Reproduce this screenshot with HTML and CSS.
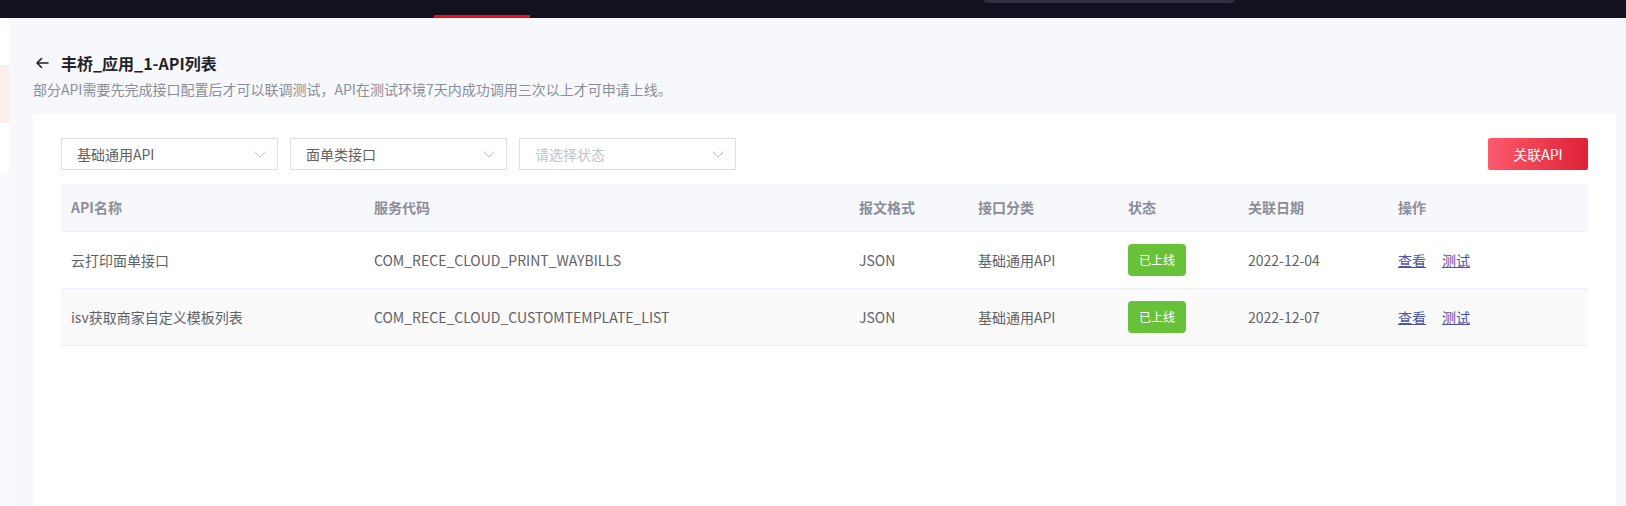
FILE: index.html
```html
<!DOCTYPE html>
<html lang="zh-CN">
<head>
<meta charset="utf-8">
<title>API列表</title>
<link rel="stylesheet" href="styles.css">
</head>
<body>
<header class="topbar">
  <div class="nav-active"></div>
  <div class="search-box"></div>
</header>
<div class="layout">
  <aside class="sidebar">
    <div class="side-a"></div>
    <div class="side-b"></div>
    <div class="side-c"></div>
    <div class="side-d"></div>
  </aside>
  <main class="main">
    <div class="page-head">
      <h1 class="title">
        <svg class="back" width="14" height="14" viewBox="0 0 14 14"><path d="M13 7H2M6.5 2.5L2 7l4.5 4.5" fill="none" stroke="#1f2329" stroke-width="1.6" stroke-linecap="round" stroke-linejoin="round"/></svg>
        <span>丰桥_应用_1-API列表</span>
      </h1>
      <p class="subtitle">部分API需要先完成接口配置后才可以联调测试，API在测试环境7天内成功调用三次以上才可申请上线。</p>
    </div>
    <section class="card">
      <div class="toolbar">
        <div class="filters">
          <div class="select"><span>基础通用API</span><svg class="chev" width="12" height="7" viewBox="0 0 12 7"><path d="M0.5 0.5L6 6L11.5 0.5" fill="none" stroke="#c0c4cc" stroke-width="1"/></svg></div>
          <div class="select"><span>面单类接口</span><svg class="chev" width="12" height="7" viewBox="0 0 12 7"><path d="M0.5 0.5L6 6L11.5 0.5" fill="none" stroke="#c0c4cc" stroke-width="1"/></svg></div>
          <div class="select placeholder"><span>请选择状态</span><svg class="chev" width="12" height="7" viewBox="0 0 12 7"><path d="M0.5 0.5L6 6L11.5 0.5" fill="none" stroke="#c0c4cc" stroke-width="1"/></svg></div>
        </div>
        <button class="btn-primary">关联API</button>
      </div>
      <table class="table">
        <colgroup>
          <col class="c1"><col class="c2"><col class="c3"><col class="c4"><col class="c5"><col class="c6"><col class="c7">
        </colgroup>
        <thead>
          <tr><th>API名称</th><th>服务代码</th><th>报文格式</th><th>接口分类</th><th>状态</th><th>关联日期</th><th>操作</th></tr>
        </thead>
        <tbody>
          <tr>
            <td>云打印面单接口</td>
            <td>COM_RECE_CLOUD_PRINT_WAYBILLS</td>
            <td>JSON</td>
            <td>基础通用API</td>
            <td><span class="badge">已上线</span></td>
            <td>2022-12-04</td>
            <td><a class="link" href="#">查看</a><a class="link" href="#">测试</a></td>
          </tr>
          <tr class="striped">
            <td>isv获取商家自定义模板列表</td>
            <td>COM_RECE_CLOUD_CUSTOMTEMPLATE_LIST</td>
            <td>JSON</td>
            <td>基础通用API</td>
            <td><span class="badge">已上线</span></td>
            <td>2022-12-07</td>
            <td><a class="link" href="#">查看</a><a class="link" href="#">测试</a></td>
          </tr>
        </tbody>
      </table>
    </section>
  </main>
  <div class="scroll-track"></div>
</div>
</body>
</html>
```
FILE: styles.css
```css
* { box-sizing: border-box; }
html, body { margin: 0; padding: 0; height: 100%; overflow: hidden; }
body {
  font-family: "Noto Sans CJK SC", "Noto Sans", sans-serif;
  font-size: 14px;
  color: #606266;
  background: #f7f8fc;
  display: flex;
  flex-direction: column;
}
.topbar {
  height: 18px;
  background: #13111f;
  display: flex;
  align-items: flex-start;
  flex-shrink: 0;
}
.nav-active {
  margin-left: 434px;
  width: 96px;
  height: 18px;
  border-bottom: 3px solid #f00d1c;
}
.search-box {
  margin-left: 454px;
  width: 250px;
  height: 3px;
  background: #302f3f;
  border-radius: 0 0 4px 4px;
}
.layout {
  flex: 1;
  display: flex;
  min-height: 0;
}
.sidebar {
  width: 9px;
  display: flex;
  flex-direction: column;
  flex-shrink: 0;
}
.side-a { height: 47px; background: #ffffff; }
.side-b { height: 58px; background: #fdeeee; }
.side-c { height: 50px; background: #ffffff; }
.side-d { flex: 1; background: #f9fafd; }
.main {
  flex: 1;
  padding: 33px 0 0 24px;
  display: flex;
  flex-direction: column;
  min-width: 0;
}
.scroll-track { width: 10px; background: #f6f7fb; flex-shrink: 0; }
.page-head { margin-bottom: 14px; }
.title {
  margin: 0 0 3px;
  font-size: 16px;
  line-height: 24px;
  font-weight: 700;
  color: #1f2329;
  display: flex;
  align-items: center;
}
.back { margin: 0 12px 0 2px; }
.subtitle {
  margin: 0;
  font-size: 14px;
  line-height: 22px;
  color: #8a8e99;
}
.card {
  flex: 1;
  background: #ffffff;
  padding: 24px 28px;
}
.toolbar {
  display: flex;
  justify-content: space-between;
  align-items: center;
  margin-bottom: 14px;
}
.filters { display: flex; gap: 12px; }
.select {
  width: 217px;
  height: 32px;
  border: 1px solid #dcdfe6;
  display: flex;
  align-items: center;
  justify-content: space-between;
  padding: 0 11px 0 15px;
  color: #606266;
  font-size: 14px;
}
.select.placeholder { color: #c0c4cc; }
.btn-primary {
  width: 100px;
  height: 32px;
  border: none;
  border-radius: 2px;
  background: linear-gradient(90deg, #fc5a6d 0%, #df2136 100%);
  color: #ffffff;
  font-family: inherit;
  font-size: 14px;
  padding: 0;
}
.table {
  width: 100%;
  border-collapse: collapse;
  table-layout: fixed;
}
.c1 { width: 303px; }
.c2 { width: 485px; }
.c3 { width: 119px; }
.c4 { width: 150px; }
.c5 { width: 120px; }
.c6 { width: 150px; }
.c7 { width: auto; }
.table th {
  height: 47px;
  background: #f7f8fc;
  text-align: left;
  font-weight: 700;
  color: #8b8e98;
  padding: 0 10px;
  border-bottom: 1px solid #ebeef5;
}
.table td {
  height: 57px;
  padding: 0 10px;
  border-bottom: 1px solid #ebeef5;
  color: #606266;
  white-space: nowrap;
}
.table tr.striped td { background: #fafafa; }
.badge {
  display: inline-block;
  height: 32px;
  line-height: 32px;
  padding: 0 11px;
  background: #67c23a;
  color: #ffffff;
  font-size: 12px;
  border-radius: 4px;
  vertical-align: middle;
}
.link {
  color: #4a54a8;
  text-decoration: underline;
  margin-right: 16px;
}
```
